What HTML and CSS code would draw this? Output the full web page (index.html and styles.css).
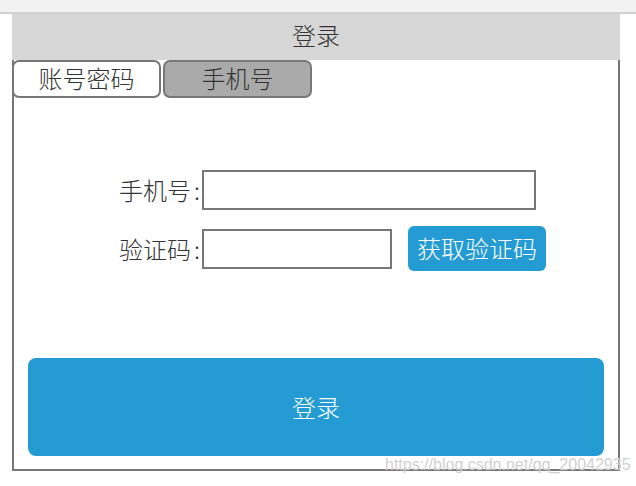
FILE: index.html
```html
<!DOCTYPE html>
<html lang="zh">
<head>
<meta charset="utf-8">
<title>登录</title>
<link rel="stylesheet" href="styles.css">
</head>
<body>
<div class="topbar"></div>
<div class="page">
  <header class="title">登录</header>
  <div class="box">
    <div class="tabs">
      <div class="tab tab-active">账号密码</div>
      <div class="tab tab-inactive">手机号</div>
    </div>
    <div class="form">
      <div class="row row-phone">
        <label class="label">手机号<span class="colon">:</span></label>
        <input class="input input-long" type="text">
      </div>
      <div class="row row-code">
        <label class="label">验证码<span class="colon">:</span></label>
        <input class="input input-short" type="text">
        <button class="code-btn">获取验证码</button>
      </div>
    </div>
    <button class="login-btn">登录</button>
  </div>
</div>
<div class="watermark">https://blog.csdn.net/qq_20042935</div>
</body>
</html>
```
FILE: styles.css
```css
html, body {
  margin: 0;
  padding: 0;
  background: #ffffff;
}
body {
  position: relative;
  width: 636px;
  height: 486px;
  overflow: hidden;
  font-family: "Noto Sans CJK SC", "Noto Sans", sans-serif;
  font-weight: 300;
  color: #333333;
}
.topbar {
  height: 12px;
  background: #f2f2f2;
  border-bottom: 2px solid #d0d0d0;
}
.page {
  width: 608px;
  margin-left: 12px;
}
.title {
  box-sizing: border-box;
  height: 46px;
  line-height: 42px;
  padding-bottom: 4px;
  background: #d7d7d7;
  text-align: center;
  font-size: 24px;
  color: #333333;
}
.box {
  box-sizing: border-box;
  height: 411px;
  border: 2px solid #777777;
  border-top: none;
  display: flex;
  flex-direction: column;
}
.tabs {
  display: flex;
  gap: 2px;
  margin-left: -2px;
}
.tab {
  box-sizing: border-box;
  width: 149px;
  height: 38px;
  line-height: 32px;
  padding-bottom: 3px;
  border: 2px solid #777777;
  border-radius: 7px;
  text-align: center;
  font-size: 24px;
  color: #333333;
}
.tab-active {
  background: #ffffff;
}
.tab-inactive {
  background: #aaaaaa;
}
.form {
  margin-top: 72px;
  display: flex;
  flex-direction: column;
  gap: 16px;
}
.row {
  display: flex;
  align-items: center;
}
.label {
  width: 186px;
  text-align: right;
  font-size: 24px;
  line-height: 40px;
  color: #333333;
  padding-right: 2px;
}
.colon {
  margin-left: 3px;
}
.input {
  box-sizing: border-box;
  height: 40px;
  border: 2px solid #777777;
  background: #ffffff;
  margin: 0;
  padding: 0 4px;
  outline: none;
}
.input-long {
  width: 334px;
}
.input-short {
  width: 190px;
}
.code-btn {
  margin-left: 16px;
  height: 45px;
  width: 138px;
  padding: 0 0 3px 0;
  border: none;
  border-radius: 6px;
  background: #259bd4;
  color: #ffffff;
  font-family: "Noto Sans CJK SC", "Noto Sans", sans-serif;
  font-weight: 300;
  font-size: 24px;
  white-space: nowrap;
}
.login-btn {
  margin: 87px 14px 0 14px;
  height: 98px;
  border: none;
  border-radius: 8px;
  background: #259bd4;
  color: #ffffff;
  font-family: "Noto Sans CJK SC", "Noto Sans", sans-serif;
  font-weight: 300;
  font-size: 24px;
  padding: 0 0 2px 0;
}
.watermark {
  position: absolute;
  left: 385px;
  top: 456px;
  font-family: "Liberation Sans", Arial, sans-serif;
  font-size: 16px;
  color: rgba(185, 185, 185, 0.7);
  text-shadow: 0 0 1px rgba(255, 255, 255, 0.9);
  white-space: nowrap;
}
```
